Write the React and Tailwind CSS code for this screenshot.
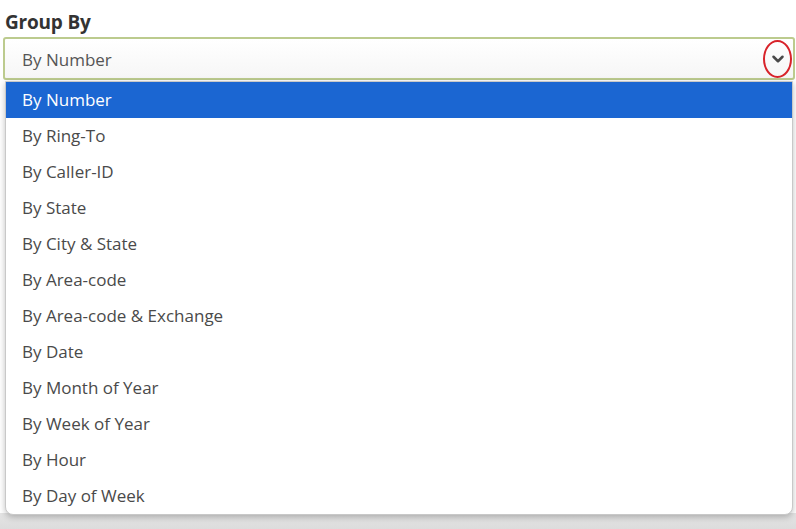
import { ChevronDown } from 'lucide-react'

const options = [
  'By Number',
  'By Ring-To',
  'By Caller-ID',
  'By State',
  'By City & State',
  'By Area-code',
  'By Area-code & Exchange',
  'By Date',
  'By Month of Year',
  'By Week of Year',
  'By Hour',
  'By Day of Week',
]

export default function App() {
  const selected = 'By Number'

  return (
    <div
      className="w-[796px] h-[529px] bg-white overflow-hidden relative"
      style={{ fontFamily: '"Open Sans", "Noto Sans", sans-serif' }}
    >
      <div className="pl-[5px] pt-[10px] h-[37px] text-[19px] leading-[24px] font-bold text-[#333] tracking-[-0.2px]">
        Group By
      </div>

      {/* select box */}
      <div className="ml-[3px] mr-[1px] h-[43px] rounded-[3px] border-2 border-[#bccb8e] bg-gradient-to-b from-white to-[#f6f6f6] flex items-center justify-between pl-[17px] pr-[1px]">
        <span className="text-[17px] text-[#555] leading-none pt-[2px]">{selected}</span>
        <div className="w-[29px] h-[38px] rounded-[50%] border-2 border-[#d8232a] flex items-center justify-center">
          <ChevronDown size={18} strokeWidth={3.4} className="text-[#4a4a4a]" />
        </div>
      </div>

      {/* options list */}
      <div className="ml-[5px] mr-[3px] mt-[1px] rounded-b-[8px] border border-[#c8c8c8] bg-white shadow-[0_2px_6px_rgba(0,0,0,0.25)] overflow-hidden relative z-10">
        {options.map((o) => (
          <div
            key={o}
            className={
              o === selected
                ? 'h-[36px] flex items-center pl-[16px] bg-[#1b66d2] text-white text-[17px]'
                : 'h-[36px] flex items-center pl-[16px] text-[#4a4a4a] text-[17px]'
            }
          >
            {o}
          </div>
        ))}
      </div>

      <div className="absolute left-0 right-0 bottom-0 h-[16px] bg-gradient-to-b from-[#e4e4e4] to-[#dcdcdc]" />
    </div>
  )
}
